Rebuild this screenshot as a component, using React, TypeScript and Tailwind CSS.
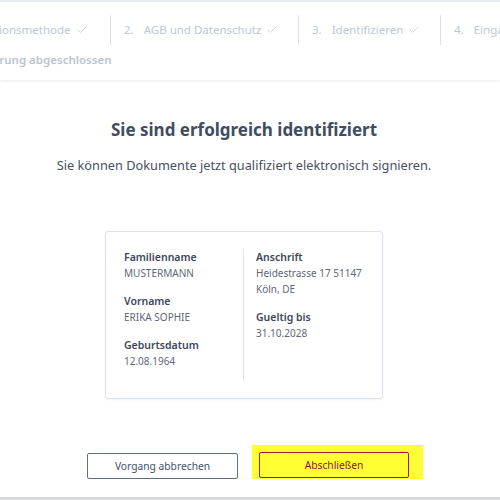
import { Check } from 'lucide-react';

const steps = [
    { no: '1.', label: 'Identifikationsmethode', width: 'w-[200px]' },
    { no: '2.', label: 'AGB und Datenschutz', width: 'w-[188px]' },
    { no: '3.', label: 'Identifizieren', width: 'w-[142px]' },
    { no: '4.', label: 'Eingabe', width: 'pr-[26px]' },
];

function Field({ label, lines }: { label: string; lines: string[] }) {
    return (
        <div className="mb-3 leading-4">
            <div className="text-[10.5px] font-semibold text-[#3c475a]">{label}</div>
            {lines.map((l) => (
                <div key={l} className="text-[10px] text-[#5e6877]">
                    {l}
                </div>
            ))}
        </div>
    );
}

export default function App() {
    return (
        <div className="min-h-screen bg-white font-['Noto_Sans',sans-serif] flex flex-col">
            <div className="h-[2px] bg-[#e8ecf0]" />
            <header className="h-[78px] overflow-hidden bg-white shadow-[0_1px_3px_rgba(0,0,0,0.08)]">
                <div className="-ml-[89px] mt-[13px] flex h-[30px] whitespace-nowrap text-[11.5px] text-[#bdc8d6]">
                    {steps.map((s, i) => (
                        <div
                            key={s.no}
                            className={`flex shrink-0 items-center pl-[13px] ${s.width} ${i < steps.length - 1 ? 'border-r border-[#dbe1e8]' : ''}`}
                        >
                            <span className="mr-[10px]">{s.no}</span>
                            <span>{s.label}</span>
                            {i < 3 && <Check className="ml-[5px] h-3 w-3 shrink-0" strokeWidth={1.5} />}
                        </div>
                    ))}
                </div>
                <div className="-ml-[70px] mt-[6px] whitespace-nowrap text-[11.5px] font-semibold text-[#b9c4d3]">
                    5. Identifizierung abgeschlossen
                </div>
            </header>

            <main className="flex flex-1 flex-col items-center pr-[12px]">
                <h1 className="mt-[37px] text-[17px] font-bold text-[#3e4d63]">
                    Sie sind erfolgreich identifiziert
                </h1>
                <p className="mt-[13px] text-[12.75px] text-[#47515f]">
                    Sie können Dokumente jetzt qualifiziert elektronisch signieren.
                </p>

                <div className="mt-[56px] flex w-[278px] rounded-[3px] border border-[#dde3ea] py-[17px] pl-[18px] shadow-[0_1px_2px_rgba(0,0,0,0.05)]">
                    <div className="w-[119px]">
                        <Field label="Familienname" lines={['MUSTERMANN']} />
                        <Field label="Vorname" lines={['ERIKA SOPHIE']} />
                        <Field label="Geburtsdatum" lines={['12.08.1964']} />
                    </div>
                    <div className="flex-1 border-l border-[#dde3ea] pl-[12px]">
                        <Field label="Anschrift" lines={['Heidestrasse 17 51147', 'Köln, DE']} />
                        <Field label="Gueltig bis" lines={['31.10.2028']} />
                    </div>
                </div>

                <div className="mt-[46px] flex items-end self-start pl-[87px]">
                    <button className="h-[26px] w-[151px] rounded-[2px] border border-[#5d6e80] text-[10.25px] text-[#3f5068]">
                        Vorgang abbrechen
                    </button>
                    <div className="ml-[14px] bg-[#ffff33] pb-[1px] pl-[7px] pr-[14px] pt-[6px]">
                        <button className="h-[26px] w-[150px] rounded-[2px] border border-[#9b1b3c] text-[10.25px] text-[#8a1538]">
                            Abschließen
                        </button>
                    </div>
                </div>
            </main>
            <div className="mt-auto h-[3px] bg-[#d6d9dd]" />
        </div>
    );
}
